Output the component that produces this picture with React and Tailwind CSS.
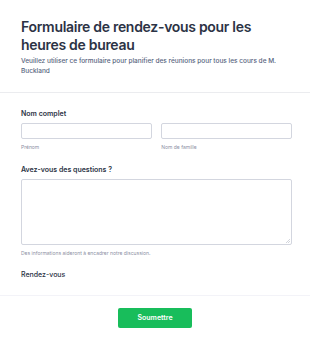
import React from 'react';

export default function App() {
  return (
    <div className="w-[310px] h-[345px] bg-white overflow-hidden" style={{ fontFamily: 'Inter, "Noto Sans", sans-serif' }}>
      <div className="pl-[21px] pr-[18px] pt-[18px] pb-[15px] border-b border-[#ebecef]">
        <h1 className="text-[14px] leading-[17.5px] font-semibold text-[#2c3345] tracking-[-0.3px]">
          Formulaire de rendez-vous pour les heures de bureau
        </h1>
        <p className="mt-[2.5px] text-[6.5px] leading-[10.5px] font-medium text-[#57647e]">
          Veuillez utiliser ce formulaire pour planifier des réunions pour tous les cours de M. Buckland
        </p>
      </div>

      <div className="pl-[21px] pr-[18px] pt-[16px]">
        <div className="text-[7px] leading-[10px] font-semibold text-[#2c3345]">Nom complet</div>
        <div className="mt-[4px] grid grid-cols-2 gap-[9.5px]">
          <div>
            <div className="h-[16px] rounded-[2px] border border-[#d3d6df]" />
            <div className="mt-[4.5px] text-[5px] leading-[8px] text-[#8c8fa3]">Prénom</div>
          </div>
          <div>
            <div className="h-[16px] rounded-[2px] border border-[#d3d6df]" />
            <div className="mt-[4.5px] text-[5px] leading-[8px] text-[#8c8fa3]">Nom de famille</div>
          </div>
        </div>

        <div className="mt-[13.5px] text-[7px] leading-[10px] font-semibold text-[#2c3345]">Avez-vous des questions ?</div>
        <div className="mt-[4px] relative h-[66.5px] rounded-[2px] border border-[#d3d6df]">
          <svg className="absolute right-[1px] bottom-[1px]" width="4" height="4" viewBox="0 0 4 4">
            <path d="M4 0 L0 4 M4 2 L2 4" stroke="#b5bac6" strokeWidth="0.6" />
          </svg>
        </div>
        <div className="mt-[4px] text-[5px] leading-[8px] text-[#8c8fa3]">Des informations aideront à encadrer notre discussion.</div>

        <div className="mt-[13px] pb-[15px] text-[7px] leading-[10px] font-medium text-[#2c3345]">Rendez-vous</div>
      </div>

      <div className="border-t border-[#f3f3f8] flex justify-center pt-[12px]">
        <button className="w-[74px] h-[20px] rounded-[2px] bg-[#18bd5b] text-white text-[7px] font-semibold">
          Soumettre
        </button>
      </div>
    </div>
  );
}
